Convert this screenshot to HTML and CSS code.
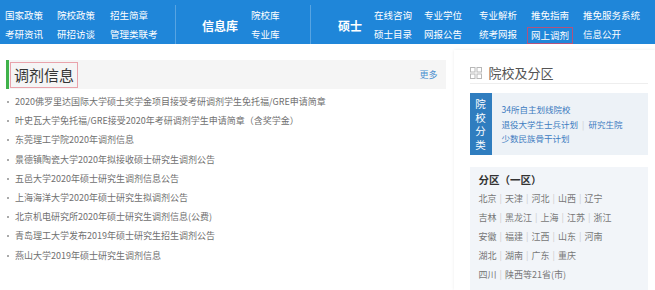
FILE: index.html
```html
<!DOCTYPE html>
<html>
<head>
  <meta charset="UTF-8">
  <title>调剂信息</title>
  <link rel="stylesheet" href="styles.css">
</head>
<body>
  <div class="nav">
    <div class="nav-group g1">
      <a>国家政策</a><a>院校政策</a><a>招生简章</a>
      <a>考研资讯</a><a>研招访谈</a><a>管理类联考</a>
    </div>
    <div class="nav-sep"></div>
    <div class="nav-label lib">信息库</div>
    <div class="nav-group g2">
      <a>院校库</a>
      <a>专业库</a>
    </div>
    <div class="nav-sep"></div>
    <div class="nav-label master">硕士</div>
    <div class="nav-group g3">
      <a>在线咨询</a><a>专业学位</a><a>专业解析</a><a>推免指南</a><a>推免服务系统</a>
      <a>硕士目录</a><a>网报公告</a><a>统考网报</a><a class="marked">网上调剂</a><a>信息公开</a>
    </div>
  </div>

  <div class="main">
    <div class="left">
      <div class="section-head">
        <div class="section-title">调剂信息</div>
        <a class="more">更多</a>
      </div>
      <ul class="news">
        <li>2020佛罗里达国际大学硕士奖学金项目接受考研调剂学生免托福/GRE申请简章</li>
        <li>叶史瓦大学免托福/GRE接受2020年考研调剂学生申请简章（含奖学金）</li>
        <li>东莞理工学院2020年调剂信息</li>
        <li>景德镇陶瓷大学2020年拟接收硕士研究生调剂公告</li>
        <li>五邑大学2020年硕士研究生调剂信息公告</li>
        <li>上海海洋大学2020年硕士研究生拟调剂公告</li>
        <li>北京机电研究所2020年硕士研究生调剂信息(公费)</li>
        <li>青岛理工大学发布2019年硕士研究生招生调剂公告</li>
        <li>燕山大学2019年硕士研究生调剂信息</li>
      </ul>
    </div>

    <div class="side">
      <div class="side-head">
        <svg class="grid-icon" width="12" height="12" viewBox="0 0 12 12">
          <rect x="0.5" y="0.5" width="4.5" height="4.5" fill="none" stroke="#b8b8b8"/>
          <rect x="7" y="0.5" width="4.5" height="4.5" fill="none" stroke="#b8b8b8"/>
          <rect x="0.5" y="7" width="4.5" height="4.5" fill="none" stroke="#b8b8b8"/>
          <rect x="7" y="7" width="4.5" height="4.5" fill="none" stroke="#b8b8b8"/>
        </svg>
        <span>院校及分区</span>
      </div>

      <div class="cat">
        <div class="cat-tag">院<br>校<br>分<br>类</div>
        <div class="cat-links">
          <div><a>34所自主划线院校</a></div>
          <div><a>退役大学生士兵计划</a><i>|</i><a>研究生院</a></div>
          <div><a>少数民族骨干计划</a></div>
        </div>
      </div>

      <div class="zone">
        <div class="zone-title">分区（一区）</div>
        <div class="zone-row">北京<i>|</i>天津<i>|</i>河北<i>|</i>山西<i>|</i>辽宁</div>
        <div class="zone-row">吉林<i>|</i>黑龙江<i>|</i>上海<i>|</i>江苏<i>|</i>浙江</div>
        <div class="zone-row">安徽<i>|</i>福建<i>|</i>江西<i>|</i>山东<i>|</i>河南</div>
        <div class="zone-row">湖北<i>|</i>湖南<i>|</i>广东<i>|</i>重庆</div>
        <div class="zone-row">四川<i>|</i>陕西等21省(市)</div>
      </div>
    </div>
  </div>
</body>
</html>
```

FILE: styles.css
```css
body {
  margin: 0;
  background: #fff;
  font-family: "Noto Sans CJK SC", "Microsoft YaHei", sans-serif;
  color: #666;
  overflow: hidden;
}

a {
  cursor: pointer;
}

/* top bar */
.nav {
  display: flex;
  align-items: stretch;
  height: 44px;
  background: #1f86d9;
  padding-left: 5px;
  color: #fff;
  font-size: 9.5px;
}

.nav-group {
  display: grid;
  grid-auto-rows: 19px;
  padding-top: 6px;
  line-height: 19px;
  white-space: nowrap;
}

.g1 {
  grid-template-columns: 52px 53px 65px;
}

.g2 {
  grid-template-columns: 59px;
}

.g3 {
  grid-template-columns: 50px 55px 52px 52px auto;
}

.nav-sep {
  width: 1px;
  margin-top: 5px;
  background: rgba(255, 255, 255, 0.25);
}

.nav-label {
  align-self: center;
  font-size: 12px;
  font-weight: bold;
  padding-top: 6px;
}

.lib {
  margin: 0 13px 0 26px;
}

.master {
  margin: 0 12px 0 27px;
}

.marked {
  justify-self: start;
  margin-left: -4px;
  padding: 0 3px;
  line-height: 15px;
  height: 15px;
  margin-top: 2px;
  border: 1px solid #b2527e;
}

/* main */
.main {
  display: flex;
}

.left {
  width: 441px;
  margin-left: 6px;
}

.section-head {
  display: flex;
  align-items: center;
  justify-content: space-between;
  height: 29px;
  margin-top: 16px;
  background: #f5f5f5;
  border-left: 3px solid #3fb24a;
}

.section-title {
  margin-left: 1px;
  height: 24px;
  line-height: 24px;
  padding: 0 3px;
  border: 1px solid #e9a3ab;
  font-size: 15px;
  color: #333;
}

.more {
  margin-right: 8px;
  font-size: 9px;
  color: #4a90d0;
}

.news {
  list-style: none;
  margin: 0;
  padding: 3px 0 0;
}

.news li {
  position: relative;
  padding-left: 9px;
  line-height: 19.2px;
  font-size: 9px;
  color: #707070;
  white-space: nowrap;
}

.news li::before {
  content: "";
  position: absolute;
  left: 1px;
  top: 9px;
  width: 2px;
  height: 2px;
  background: #aaa;
}

/* sidebar */
.side {
  width: 179px;
  margin: 6px 0 0 8px;
  padding: 0 7px 0 16px;
  height: 240px;
  box-shadow: 0 0 3px rgba(0, 0, 0, 0.08);
}

.side-head {
  display: flex;
  align-items: center;
  gap: 7px;
  height: 21px;
  margin-top: 12px;
  border-bottom: 1px solid #eee;
  font-size: 13px;
  color: #555;
}

.cat {
  display: flex;
  height: 62px;
  margin-top: 9px;
  background: #edf2f7;
}

.cat-tag {
  display: flex;
  align-items: center;
  justify-content: center;
  width: 22px;
  background: #2f7dbf;
  color: #fff;
  font-size: 10.5px;
  line-height: 13.5px;
  text-align: center;
}

.cat-links {
  display: flex;
  flex-direction: column;
  justify-content: center;
  padding-left: 10px;
  font-size: 8.5px;
  line-height: 14.5px;
  color: #3c7bc0;
}

.cat-links i,
.zone-row i {
  font-style: normal;
  color: #ccc;
  margin: 0 4px;
}

.zone {
  margin-top: 12px;
  padding: 4px 0 0 9px;
  height: 120px;
  background: #f2f5f9;
}

.zone-title {
  font-size: 10.5px;
  font-weight: bold;
  color: #333;
  line-height: 18px;
}

.zone-row {
  font-size: 9px;
  color: #777;
  line-height: 19px;
  white-space: nowrap;
}

.zone-row i {
  margin: 0 3px;
}
```
